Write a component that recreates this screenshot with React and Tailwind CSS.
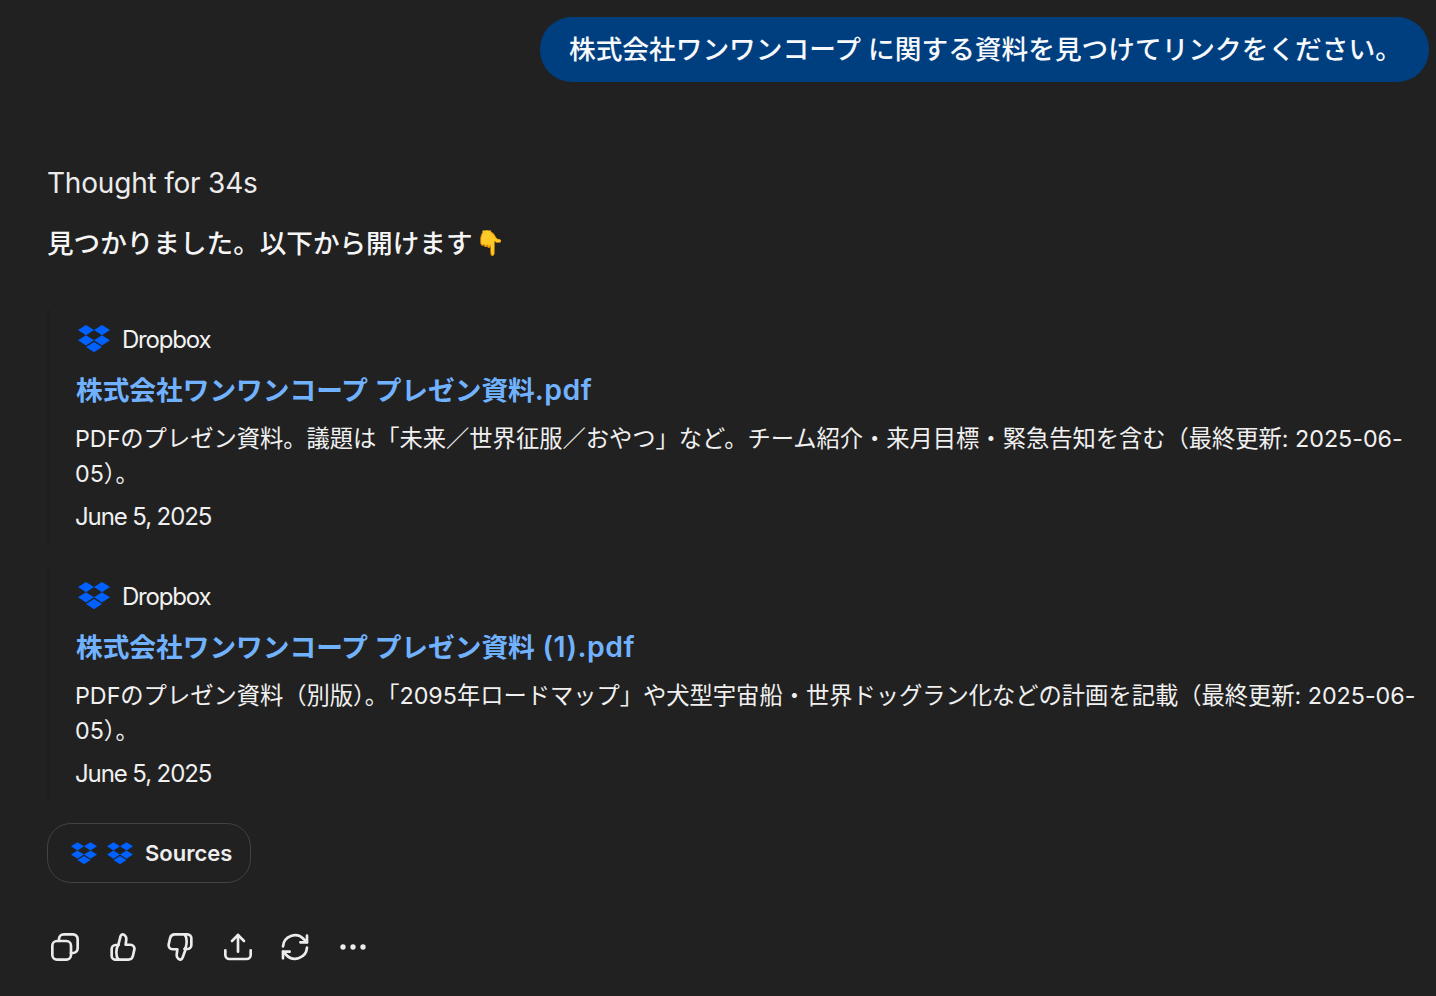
import React from "react";

const font = { fontFamily: "Inter, 'Noto Sans CJK JP', sans-serif" };

function DropboxLogo({ className }) {
    return (
        <svg viewBox="0 0 32 28" className={className} fill="#0061ff">
            <path d="M8 0 0 5.100l8 5.100 8-5.100L8 0Z" />
            <path d="M24 0l-8 5.100 8 5.100 8-5.100L24 0Z" />
            <path d="M0 15.300l8 5.100 8-5.100-8-5.100-8 5.100Z" />
            <path d="M24 10.200l-8 5.100 8 5.100 8-5.100-8-5.100Z" />
            <path d="M8 22.100l8 5.100 8-5.100-8-5.100-8 5.100Z" />
        </svg>
    );
}

function FileResult({ title, suffix, desc }) {
    return (
        <div className="border-l-[3px] border-[#1e1e1e] pl-[26px] pt-[14px] pb-[10px]">
            <div className="flex items-center gap-[12px] h-[34px] pl-[2px]">
                <DropboxLogo className="w-[32px] h-[28px] -translate-y-[1px]" />
                <span className="text-[24px] tracking-[-1.2px] text-[#f2f2f2]">Dropbox</span>
            </div>
            <div className="mt-[12px] text-[26.7px] leading-[42px] font-semibold text-[#71b2ff]">
                {title}<span className="text-[28.4px] tracking-[0.5px]">{suffix}</span>
            </div>
            <div className="mt-[10px] -ml-[1px] text-[23.3px] leading-[35px] tracking-[-0.03px] text-[#f0f0f0]">{desc}</div>
            <div className="mt-[8px] -ml-[1px] text-[24px] leading-[36px] tracking-[-1.1px] text-[#f0f0f0]">June 5, 2025</div>
        </div>
    );
}

function ActionIcon({ children }) {
    return (
        <svg viewBox="0 0 24 24" className="w-[32px] h-[32px]" fill="none" stroke="#ececec" strokeWidth="2" strokeLinecap="round" strokeLinejoin="round">
            {children}
        </svg>
    );
}

export default function App() {
    return (
        <div className="w-[1436px] h-[996px] overflow-hidden bg-[#212121] text-white" style={font}>
            <div className="flex justify-end pt-[17px] pr-[7px]">
                <div className="h-[65px] w-[889px] rounded-[32px] bg-[#003f7f] pl-[29px] flex items-center text-[26.7px] font-medium whitespace-nowrap text-[#f7f9fc]">
                    株式会社ワンワンコープ に関する資料を見つけてリンクをください。
                </div>
            </div>

            <div className="pl-[47px] pr-[8px]">
                <div className="mt-[79px] text-[28px] leading-[44px] tracking-[-0.2px] text-[#ececec]">Thought for 34s</div>
                <div className="mt-[16px] flex items-center text-[26.6px] leading-[44px] font-medium text-[#f5f5f5]">
                    見つかりました。以下から開けます
                    <span className="text-[24px] ml-[2px]">👇</span>
                </div>

                <div className="mt-[44px] flex flex-col gap-[21px]">
                    <FileResult
                        title="株式会社ワンワンコープ プレゼン資料"
                        suffix=".pdf"
                        desc="PDFのプレゼン資料。議題は「未来／世界征服／おやつ」など。チーム紹介・来月目標・緊急告知を含む（最終更新: 2025-06-05）。"
                    />
                    <FileResult
                        title="株式会社ワンワンコープ プレゼン資料"
                        suffix=" (1).pdf"
                        desc="PDFのプレゼン資料（別版）。「2095年ロードマップ」や犬型宇宙船・世界ドッグラン化などの計画を記載（最終更新: 2025-06-05）。"
                    />
                </div>

                <div className="mt-[21px] w-[204px] h-[60px] rounded-[24px] border border-[#424242] flex items-center pl-[23px]">
                    <DropboxLogo className="w-[26px] h-[23px]" />
                    <DropboxLogo className="w-[26px] h-[23px] ml-[10px]" />
                    <span className="ml-[12px] text-[22px] font-semibold text-[#eeeeee]">Sources</span>
                </div>

                <div className="mt-[48px] flex items-center gap-[25.6px] pl-[2px]">
                    <ActionIcon>
                        <rect x="2.500" y="7.500" width="14" height="14" rx="3.500" />
                        <path d="M7.500 7.500V6A3.500 3.500 0 0 1 11 2.500h7A3.500 3.500 0 0 1 21.500 6v7a3.500 3.500 0 0 1-3.500 3.500h-1.500" />
                    </ActionIcon>
                    <ActionIcon>
                        <path d="M8.500 21.500h7.500a3.500 3.500 0 0 0 3.400-2.700l1.100-4.800a3 3 0 0 0-2.900-3.700h-3.600l.5-4.200c.2-2-1.700-4-3.300-3.400-.6.200-.9.700-1.100 1.300L8.500 10.500" />
                        <path d="M8.500 21.500H6.500a3 3 0 0 1-3-3v-5a3 3 0 0 1 3-3h2" />
                        <path d="M8.500 10.500c-2 2.500-2 8.500 0 11" />
                    </ActionIcon>
                    <ActionIcon>
                        <path d="M15.500 2.500H8a3.500 3.500 0 0 0-3.400 2.700l-1.100 4.800a3 3 0 0 0 2.900 3.700h3.600l-.5 4.200c-.2 2 1.700 4 3.300 3.400.6-.2.9-.7 1.100-1.300l2.600-7" />
                        <path d="M15.500 2.500h2a3 3 0 0 1 3 3v5a3 3 0 0 1-3 3h-2" />
                        <path d="M15.500 2.500c2 2.500 2 8.500 0 11" />
                    </ActionIcon>
                    <ActionIcon>
                        <path d="M12 15.500V3" />
                        <path d="M7.500 7.500 12 3l4.500 4.500" />
                        <path d="M2.500 14.500V18a3 3 0 0 0 3 3h13a3 3 0 0 0 3-3v-3.500" />
                    </ActionIcon>
                    <ActionIcon>
                        <path d="M3 11.500A9 9 0 0 1 18.500 6L21 8.500" />
                        <path d="M21 3.500v5h-5" />
                        <path d="M21 12.500A9 9 0 0 1 5.500 18L3 15.500" />
                        <path d="M3 20.500v-5h5" />
                    </ActionIcon>
                    <svg viewBox="0 0 24 24" className="w-[32px] h-[32px]" fill="#ececec">
                        <circle cx="4.500" cy="12" r="2" />
                        <circle cx="12" cy="12" r="2" />
                        <circle cx="19.500" cy="12" r="2" />
                    </svg>
                </div>
            </div>
        </div>
    );
}
